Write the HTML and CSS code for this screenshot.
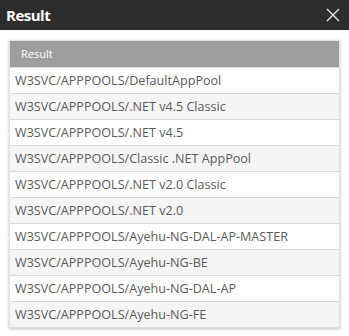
FILE: index.html
```html
<!DOCTYPE html>
<html>
<head>
<meta charset="utf-8">
<link rel="stylesheet" href="styles.css">
</head>
<body>
<div class="dialog">
  <div class="titlebar">
    <span class="title">Result</span>
    <svg class="close" width="14" height="14" viewBox="0 0 14 14"><path d="M1 1L13 13M13 1L1 13" stroke="#e8e8e8" stroke-width="1.4" fill="none"/></svg>
  </div>
  <div class="content">
    <div class="table">
      <div class="head">Result</div>
      <div class="row">W3SVC/APPPOOLS/DefaultAppPool</div>
      <div class="row alt">W3SVC/APPPOOLS/.NET v4.5 Classic</div>
      <div class="row">W3SVC/APPPOOLS/.NET v4.5</div>
      <div class="row alt">W3SVC/APPPOOLS/Classic .NET AppPool</div>
      <div class="row">W3SVC/APPPOOLS/.NET v2.0 Classic</div>
      <div class="row alt">W3SVC/APPPOOLS/.NET v2.0</div>
      <div class="row">W3SVC/APPPOOLS/Ayehu-NG-DAL-AP-MASTER</div>
      <div class="row alt">W3SVC/APPPOOLS/Ayehu-NG-BE</div>
      <div class="row">W3SVC/APPPOOLS/Ayehu-NG-DAL-AP</div>
      <div class="row alt">W3SVC/APPPOOLS/Ayehu-NG-FE</div>
    </div>
  </div>
</div>
</body>
</html>
```
FILE: styles.css
```css
html, body { margin: 0; padding: 0; background: #fff; }
body { font-family: "Open Sans", sans-serif; }
.dialog { width: 349px; height: 336px; background: #fff; }
.titlebar {
  height: 30px; background: #2d2d2d; display: flex; align-items: center;
  justify-content: space-between; padding: 0 9px 0 6px; box-sizing: border-box;
}
.title { color: #fff; font-weight: 700; font-size: 15px; letter-spacing: -0.5px; }
.close { display: block; }
.content { padding: 10px 9px 0 9px; }
.table {
  border: 1px solid #e0e0e0; box-shadow: 0 1px 3px rgba(0,0,0,0.25);
}
.head {
  background: #9e9e9e; color: #fff; height: 26px; line-height: 26px; padding-left: 11px;
  font-size: 11px;
}
.row {
  height: 25px; line-height: 25px; border-top: 1px solid #dcdcdc; color: #5a5a5a;
  padding-left: 5px; background: #fff; font-size: 12.6px;
}
.row.alt { background: #f5f5f5; }
```
